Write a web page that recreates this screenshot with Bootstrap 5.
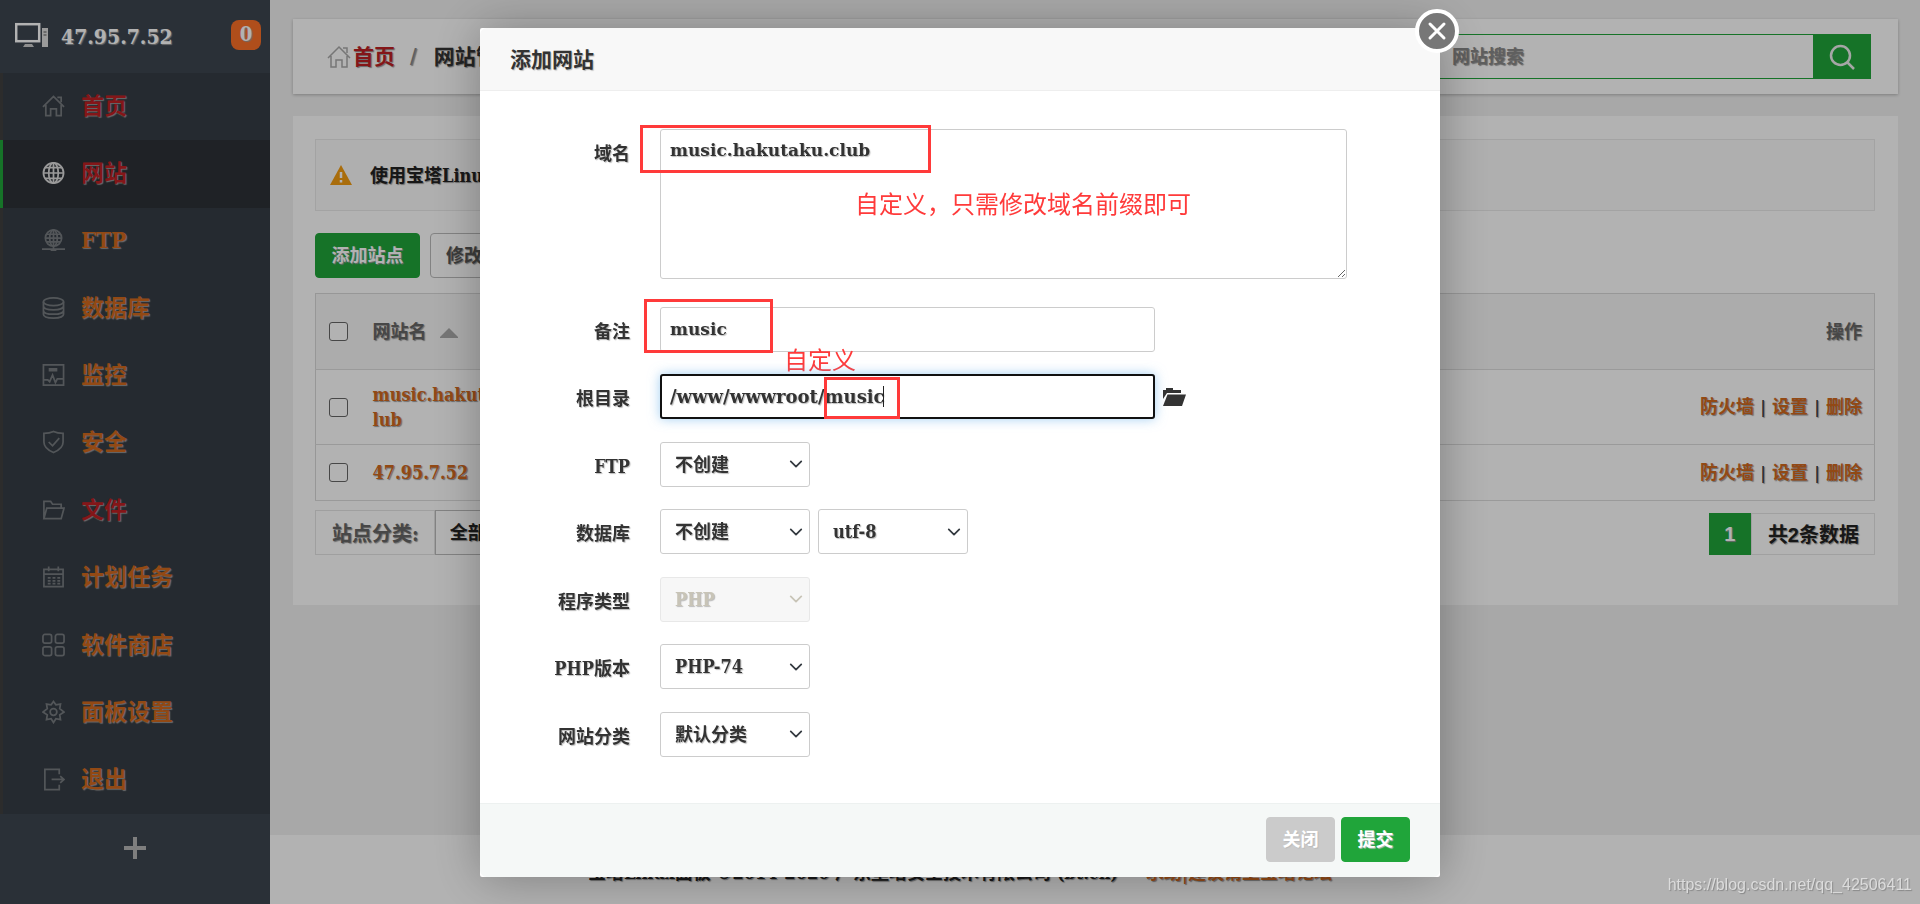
<!DOCTYPE html>
<html lang="zh-CN">
<head>
<meta charset="utf-8">
<meta name="viewport" content="width=device-width, initial-scale=1">
<title>宝塔Linux面板</title>
<link rel="stylesheet" href="https://cdn.jsdelivr.net/npm/bootstrap@5.3.0/dist/css/bootstrap.min.css">
<style>
:root{--green:#20a53a;--link:#d2691e;--red:#be2023;--mark:#ff3a3a}
body{font-family:"DejaVu Serif Condensed","Noto Sans CJK SC",serif;font-size:18px;line-height:25px;font-weight:700;color:#333;background:#f1f1f1;text-shadow:1px 1px 1px #999}
button,input,select,textarea{font-weight:inherit;text-shadow:inherit}
a{color:var(--link);text-decoration:none}
a.hot{color:var(--red)}
.side{width:270px;background:#3d4550}
.side-head{height:73px;padding:0 9px 0 15px;gap:12px;font-size:21px;color:#fff}
.side-head .count{width:30px;height:30px;border-radius:8px;background:#fb7028;font-size:20px}
.side-menu{min-height:741px;background:#363d45}
.side-menu a{font-size:23px;line-height:30px;padding:0 0 2px 39px;gap:16px;border-left:3px solid #3f3f3f}
.side-menu a.on{background:#2d3237;border-color:var(--green)}
.side-menu svg{width:23px;height:24px;fill:none;stroke:#777c80;stroke-width:1.8}
.side-menu a.on svg{stroke:#ddd}
.side-add{height:64px;color:#b5b5b5;background:none;border:0}
.page{padding:19px 22px 0 293px}
.crumb{height:75px;padding:0 27px 0 34px;background:#fff;box-shadow:0 1px 3px rgba(0,0,0,.25);font-size:21px}
.crumb .home{margin-right:2px}
.crumb .slash{color:#888;font-weight:400;font-family:"Liberation Sans",sans-serif;padding:0 17px 0 15px;font-size:24px}
.find{width:434px;height:45px}
.find input{border:1px solid var(--green);border-right:0;background:#fff;padding:0 14px;font-size:18px}
.find input::placeholder{color:#888;opacity:1}
.find button{width:58px;background:var(--green);border:0}
.panel{margin-top:22px;padding:23px 23px 50px 22px;background:#fff}
.tip{height:72px;border:1px solid #eaeaea;background:#fbfbfb;padding:0 14px;gap:18px;color:#222;overflow:hidden;white-space:nowrap}
.tools{margin-top:22px;gap:10px}
.btn{--bs-btn-font-size:18px;--bs-btn-font-weight:700;--bs-btn-line-height:25px;--bs-btn-border-radius:4px;height:45px;padding:0 15px;min-width:69px}
.tools .btn{min-width:105px}
.btn-go{background:var(--green)!important;color:#fff!important;border-color:var(--green)!important}
.btn-line{border-color:#bbb;color:#555}
.btn-gray{background:#cbcbcb;color:#fff;border-color:#cbcbcb}
.sites{border:1px solid #d8d8d8;margin:15px 0 9px;--bs-table-bg:transparent}
.sites>:not(caption)>*>*{height:56px;padding:12px 12px 12px;border-color:#ddd;vertical-align:middle;color:#333}
.sites thead th{height:76px;background:#f6f6f6;color:#666}
.sites .c1{width:57px;padding-left:13px}
.sites .c2{width:165px;padding-left:0;padding-right:0;word-break:break-all}
.sites .form-check-input{display:block;width:19px;height:19px;margin:0;border-color:#666;border-radius:3px}
.sites .up{width:18px;height:10px;fill:#aaa;margin-left:8px}
.sites .bar{font-family:"Liberation Sans",sans-serif;font-weight:400;padding:0 1px}
.filter label{height:45px;border:1px solid #e4e4e4;padding:3px 15px 0 16px;font-size:20px;color:#666}
.filter select{height:45px;width:180px;border:1px solid #bbb;border-radius:0;font-size:18px;font-weight:700;color:#222;padding-left:14px;background-color:#fff}
.pages{height:42px;font-size:20px;color:#222;font-family:"Liberation Sans","Noto Sans CJK SC",sans-serif}
.pages .cur{width:42px;background:var(--green);color:#fff}
.pages .all{border:1px solid #e6e6e6;padding:2px 15px 0 16px}
.foot{height:69px;padding-top:6px;background:#fff;color:#222}
.shade{background:rgba(0,0,0,.3)}
.modal{--bs-modal-width:960px;--bs-modal-border-radius:2px;--bs-modal-margin:28px}
.modal-dialog{min-height:calc(100% - 56px)}
.modal-content{border:0;box-shadow:1px 1px 50px rgba(0,0,0,.3);color:#333;text-shadow:1px 1px 1px #bbb}
.modal-header{height:63px;padding:2px 30px 0;background:#f8f8f8;border-bottom:1px solid #eee}
.modal-title{font-size:21px;line-height:30px;font-weight:700}
.modal-body{padding:38px 0 46px}
.modal-footer{height:74px;padding:0 30px 2px;gap:6px;background:#f5f8f7;border-top:1px solid #edf1f0}
.modal-footer>*{margin:0}
.x-btn{right:-20px;top:-20px;width:46px;height:46px;background:none;border:0}
.site-form{min-height:628px}
.f-row{gap:30px}
.f-row>.f-label{width:150px;text-align:right;line-height:49px;height:45px}
.f-row.tall{margin-bottom:5px}
.site-form .form-control,.site-form .form-select{border:1px solid #ccc;border-radius:3px;font-size:18px;font-weight:700;line-height:25px;color:#333;height:45px;padding:0 9px}
.site-form .form-control{font-family:"DejaVu Serif",serif;font-size:17px}
.site-form textarea.form-control{height:150px;width:687px;padding:8px 9px}
.site-form input.form-control{width:495px}
.site-form input.active{border:2px solid #111;padding:0 8px;font-size:18px;box-shadow:0 0 12px rgba(102,175,233,.6)}
.site-form .form-select{width:150px;padding-left:14px;background-position:right 5px center;background-size:16px 14px}
.site-form .form-select:disabled{background-color:#f7f7f7;border-color:#e8e8e8;color:#c8c4b7;opacity:1;background-image:url("data:image/svg+xml,%3csvg xmlns='http://www.w3.org/2000/svg' viewBox='0 0 16 16'%3e%3cpath fill='none' stroke='%23c8c4b7' stroke-linecap='round' stroke-linejoin='round' stroke-width='2' d='m2 5 6 6 6-6'/%3e%3c/svg%3e")}
.box{position:absolute;border:3px solid var(--mark);pointer-events:none}
.note{position:absolute;color:var(--mark);font:400 24px/30px "Noto Sans CJK SC",sans-serif;text-shadow:none;white-space:nowrap}
.b1{left:-20px;top:-4px;width:291px;height:48px}
.b2{left:-16px;top:-8px;width:129px;height:54px}
.b3{left:164px;top:3px;width:76px;height:42px}
.n1{left:195px;top:59px}
.n2{left:124px;top:37px}
.caret{position:absolute;left:223px;top:12px;width:1px;height:21px;background:#222}
.wm{position:fixed;right:8px;bottom:7px;z-index:2000;font:400 16px/24px "Liberation Sans",sans-serif;color:#dcdcdc;text-shadow:1px 1px 1px #888}
</style>
</head>
<body class="d-flex flex-column min-vh-100">

<aside class="side position-fixed top-0 bottom-0 start-0 d-flex flex-column">
  <div class="side-head d-flex align-items-center flex-shrink-0">
    <svg width="34" height="26" viewBox="0 0 34 26" class="flex-shrink-0 mb-1"><rect x="1.2" y="2.2" width="23" height="17" fill="none" stroke="#fff" stroke-width="2.5"/><path d="M8 25h11l-2-3h-7z" fill="#ccc"/><path d="M27 6h6v19h-6z" fill="#ddd"/><path d="M28.500 10h3M28.500 13h3" stroke="#555"/></svg>
    <span class="me-auto">47.95.7.52</span>
    <span class="count d-flex align-items-center justify-content-center mb-1">0</span>
  </div>
  <nav class="side-menu d-flex flex-column flex-shrink-0">
    <a href="#" class="hot d-flex flex-fill align-items-center"><svg viewBox="0 0 24 24"><path d="M1 13 12 2l11 11M4 11v11h5v-7h6v7h5V11M16 3h4v5"/></svg>首页</a>
    <a href="#" class="hot on d-flex flex-fill align-items-center"><svg viewBox="0 0 24 24"><circle cx="12" cy="12" r="10.500"/><ellipse cx="12" cy="12" rx="5" ry="10.500"/><path d="M12 1v22M1 12h22M3 6.500h18M3 17.500h18"/></svg>网站</a>
    <a href="#" class="d-flex flex-fill align-items-center"><svg viewBox="0 0 24 24"><circle cx="12" cy="10" r="8.500"/><ellipse cx="12" cy="10" rx="4" ry="8.500"/><path d="M12 1v20M4 10h16M5 6h14M5 14h14M0 21.500h24M9 22.500h6"/></svg>FTP</a>
    <a href="#" class="d-flex flex-fill align-items-center"><svg viewBox="0 0 24 24"><ellipse cx="12" cy="5.500" rx="10.500" ry="4"/><path d="M1.500 5.500v13c0 5.300 21 5.300 21 0v-13M1.500 10c0 5.300 21 5.300 21 0M1.500 14.500c0 5.300 21 5.300 21 0"/></svg>数据库</a>
    <a href="#" class="d-flex flex-fill align-items-center"><svg viewBox="0 0 24 24"><path d="M1.500 1.500h21v21h-21zM7 5.500h9M7 7.500h9M2 17h4l2 2 3-7 3 8 2-4h6"/></svg>监控</a>
    <a href="#" class="d-flex flex-fill align-items-center"><svg viewBox="0 0 24 24"><path d="M12 1c3 1.500 6 2 10 2v9c0 5-4 8.500-10 11C6 20.500 2 17 2 12V3c4 0 7-.5 10-2zM7 12l4 4 7-8"/></svg>安全</a>
    <a href="#" class="hot d-flex flex-fill align-items-center"><svg viewBox="0 0 24 24"><path d="M2 21V3h7l2 3h9v4M2 21 5 10h18l-3 11z"/></svg>文件</a>
    <a href="#" class="d-flex flex-fill align-items-center"><svg viewBox="0 0 24 24"><path d="M2 4h20v18H2zM2 9h20M7 1v5M17 1v5M6 13h3m2 0h3m2 0h3M6 16h3m2 0h3m2 0h3M6 19h3m2 0h3m2 0h3"/></svg>计划任务</a>
    <a href="#" class="d-flex flex-fill align-items-center"><svg viewBox="0 0 24 24"><rect x="1" y="1" width="9" height="9" rx="2"/><rect x="14" y="1" width="9" height="9" rx="2"/><rect x="1" y="14" width="9" height="9" rx="2"/><rect x="14" y="14" width="9" height="9" rx="2"/></svg>软件商店</a>
    <a href="#" class="d-flex flex-fill align-items-center"><svg viewBox="0 0 24 24"><circle cx="12" cy="12" r="3.500"/><path d="m12 1 2.500 3.500 4.800-.8-.8 4.800L23 12l-4.500 3 .8 5-4.800-1L12 23l-2.500-4-4.800 1 .8-5L1 12l4.500-3.500-.8-4.800 4.800.8z"/></svg>面板设置</a>
    <a href="#" class="d-flex flex-fill align-items-center"><svg viewBox="0 0 24 24"><path d="M18 7V2H3v21h15v-5M10 12.500h12M19 9l4 3.500-4 3.500"/></svg>退出</a>
  </nav>
  <button type="button" class="side-add" aria-label="添加"><svg width="22" height="22"><path d="M11 0v22M0 11h22" stroke="currentColor" stroke-width="4"/></svg></button>
</aside>

<main class="page flex-fill">
  <div class="crumb d-flex align-items-center">
    <svg width="24" height="24" viewBox="0 0 24 24" fill="none" stroke="#aaa" stroke-width="1.500" class="home"><path d="M1 13 12 2l11 11M4 11v11h5v-7h6v7h5V11M16 3h4v5"/></svg>
    <a href="#" class="hot">首页</a><span class="slash">/</span><span>网站管理</span>
    <form class="find d-flex ms-auto"><input type="text" class="flex-fill" placeholder="网站搜索" aria-label="网站搜索"><button type="button" aria-label="搜索"><svg width="26" height="26" viewBox="0 0 26 26" fill="none" stroke="#eee" stroke-width="2.500"><circle cx="11.500" cy="11.500" r="9.500"/><path d="m18 18 7 7"/></svg></button></form>
  </div>

  <div class="panel">
    <div class="tip d-flex align-items-center">
      <svg width="22" height="20" viewBox="0 0 22 20" class="flex-shrink-0"><path d="m11 0 11 20H0z" fill="#f39c12"/><path d="M11 7v6M11 15v2.500" stroke="#fff" stroke-width="2.500"/></svg>
      <span>使用宝塔Linux面板</span>
    </div>
    <div class="tools d-flex">
      <button type="button" class="btn btn-go">添加站点</button>
      <button type="button" class="btn btn-line">修改默认页</button>
    </div>
    <table class="table sites">
      <thead><tr>
        <th class="c1"><input type="checkbox" class="form-check-input" aria-label="全选"></th>
        <th class="c2">网站名 <svg class="up" viewBox="0 0 18 10"><path d="m9 0 9 9v1H0V9z"/></svg></th>
        <th class="text-end">操作</th>
      </tr></thead>
      <tbody>
        <tr><td class="c1"><input type="checkbox" class="form-check-input" aria-label="music.hakutaku.club"></td><td class="c2"><a href="#">music.hakutaku.club</a></td>
          <td class="text-end"><a href="#">防火墙</a> <span class="bar">|</span> <a href="#">设置</a> <span class="bar">|</span> <a href="#">删除</a></td></tr>
        <tr><td class="c1"><input type="checkbox" class="form-check-input" aria-label="47.95.7.52"></td><td class="c2"><a href="#">47.95.7.52</a></td>
          <td class="text-end"><a href="#">防火墙</a> <span class="bar">|</span> <a href="#">设置</a> <span class="bar">|</span> <a href="#">删除</a></td></tr>
      </tbody>
    </table>
    <div class="d-flex justify-content-between align-items-end">
      <div class="filter d-flex"><label for="cat" class="d-flex align-items-center">站点分类:</label><select id="cat" class="form-select"><option>全部分类</option></select></div>
      <div class="pages d-flex"><span class="cur d-flex align-items-center justify-content-center">1</span><span class="all d-flex align-items-center">共2条数据</span></div>
    </div>
  </div>
</main>

<footer class="foot d-flex align-items-center justify-content-center">
  <span class="me-4 pe-1">宝塔Linux面板 ©2014-2020 广东堡塔安全技术有限公司 (bt.cn)</span>
  <a href="#">求助|建议请上宝塔论坛</a>
</footer>

<div class="modal shade d-block" tabindex="-1" role="dialog" aria-labelledby="dlg">
  <div class="modal-dialog modal-dialog-centered">
    <div class="modal-content">
      <div class="modal-header"><h1 class="modal-title" id="dlg">添加网站</h1></div>
      <button type="button" class="x-btn position-absolute p-0" aria-label="关闭"><svg width="46" height="46" viewBox="0 0 46 46" class="d-block"><circle cx="23" cy="23" r="20" fill="#777" stroke="#fff" stroke-width="4"/><path d="m16 16 14 14M30 16 16 30" stroke="#fff" stroke-width="3" stroke-linecap="round"/></svg></button>
      <div class="modal-body">
        <form class="site-form d-flex flex-column justify-content-between">
          <div class="f-row tall d-flex"><label class="f-label" for="f1">域名</label>
            <div class="position-relative"><textarea id="f1" class="form-control">music.hakutaku.club</textarea><span class="box b1"></span><span class="note n1">自定义，只需修改域名前缀即可</span></div></div>
          <div class="f-row d-flex"><label class="f-label" for="f2">备注</label>
            <div class="position-relative"><input id="f2" type="text" class="form-control" value="music"><span class="box b2"></span><span class="note n2">自定义</span></div></div>
          <div class="f-row d-flex"><label class="f-label" for="f3">根目录</label>
            <div class="position-relative d-flex align-items-center gap-2"><input id="f3" type="text" class="form-control active" value="/www/wwwroot/music"><span class="caret"></span><span class="box b3"></span>
              <svg width="23" height="18" viewBox="0 0 23 18" fill="#333"><path d="M0 11V2h3V0h7v2h8v3H4z"/><path d="M4.500 6.500H23L19 18H0z"/></svg></div></div>
          <div class="f-row d-flex"><label class="f-label" for="f4">FTP</label><select id="f4" class="form-select"><option>不创建</option></select></div>
          <div class="f-row d-flex"><label class="f-label" for="f5">数据库</label><div class="d-flex gap-2"><select id="f5" class="form-select"><option>不创建</option></select><select class="form-select" aria-label="编码"><option>utf-8</option></select></div></div>
          <div class="f-row d-flex"><label class="f-label" for="f6">程序类型</label><select id="f6" class="form-select" disabled><option>PHP</option></select></div>
          <div class="f-row d-flex"><label class="f-label" for="f7">PHP版本</label><select id="f7" class="form-select"><option>PHP-74</option></select></div>
          <div class="f-row d-flex"><label class="f-label" for="f8">网站分类</label><select id="f8" class="form-select"><option>默认分类</option></select></div>
        </form>
      </div>
      <div class="modal-footer"><button type="button" class="btn btn-gray">关闭</button><button type="button" class="btn btn-go">提交</button></div>
    </div>
  </div>
</div>
<div class="wm">https://blog.csdn.net/qq_42506411</div>
<script src="https://cdn.jsdelivr.net/npm/bootstrap@5.3.0/dist/js/bootstrap.bundle.min.js"></script>
</body>
</html>
